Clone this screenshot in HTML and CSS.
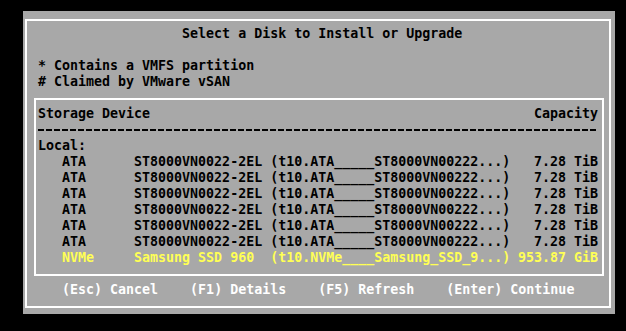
FILE: index.html
```html
<!DOCTYPE html>
<html>
  <head>
    <title>Select a Disk to Install or Upgrade</title>
    <link rel="stylesheet" href="styles.css">
  </head>
  <body>
    <div class="dialog">
      <div class="frame">
        <div class="title">Select a Disk to Install or Upgrade</div>
        <div class="legend">
          <div>* Contains a VMFS partition</div>
          <div># Claimed by VMware vSAN</div>
        </div>
        <div class="devices">
          <div class="head">
            <span>Storage Device</span>
            <span>Capacity</span>
          </div>
          <div class="rule"></div>
          <div>Local:</div>
          <div class="disk">
            <span>ATA</span><span>ST8000VN0022-2EL</span><span>(t10.ATA_____ST8000VN00222...)</span><span class="size">7.28 TiB</span>
          </div>
          <div class="disk">
            <span>ATA</span><span>ST8000VN0022-2EL</span><span>(t10.ATA_____ST8000VN00222...)</span><span class="size">7.28 TiB</span>
          </div>
          <div class="disk">
            <span>ATA</span><span>ST8000VN0022-2EL</span><span>(t10.ATA_____ST8000VN00222...)</span><span class="size">7.28 TiB</span>
          </div>
          <div class="disk">
            <span>ATA</span><span>ST8000VN0022-2EL</span><span>(t10.ATA_____ST8000VN00222...)</span><span class="size">7.28 TiB</span>
          </div>
          <div class="disk">
            <span>ATA</span><span>ST8000VN0022-2EL</span><span>(t10.ATA_____ST8000VN00222...)</span><span class="size">7.28 TiB</span>
          </div>
          <div class="disk">
            <span>ATA</span><span>ST8000VN0022-2EL</span><span>(t10.ATA_____ST8000VN00222...)</span><span class="size">7.28 TiB</span>
          </div>
          <div class="disk selected">
            <span>NVMe</span><span>Samsung SSD 960</span><span>(t10.NVMe____Samsung_SSD_9...)</span><span class="size">953.87 GiB</span>
          </div>
        </div>
        <div class="keys">
          <span>(Esc) Cancel</span>
          <span>(F1) Details</span>
          <span>(F5) Refresh</span>
          <span>(Enter) Continue</span>
        </div>
      </div>
    </div>
  </body>
</html>
```

FILE: styles.css
```css
body {
  margin: 0;
  padding: 11px 0 0 23px;
  background-color: #000;
  font-family: "DejaVu Sans Mono", "Liberation Mono", monospace;
  font-size: 13.3px;
  font-weight: bold;
  line-height: 16px;
  color: #000;
}
.dialog {
  width: 592px;
  height: 303px;
  box-sizing: border-box;
  padding: 8px 4px 6px 2px;
  background-color: #a8a8a8;
}
.frame {
  height: 100%;
  box-sizing: border-box;
  border: 2px solid #fff;
  padding: 5px 5px 8px 7px;
}
.title {
  padding-left: calc(4px + 18ch);
  margin-bottom: 16px;
}
.legend {
  padding-left: 4px;
  margin-bottom: 8px;
}
.devices {
  border: 2px solid #fff;
  padding: 6px 4px 8px 2px;
  white-space: nowrap;
}
.head {
  display: flex;
  justify-content: space-between;
}
.rule {
  height: 16px;
  background: repeating-linear-gradient(90deg, #000 0 6px, transparent 6px 8px) 0 7px / 100% 2px no-repeat;
}
.disk {
  display: grid;
  grid-template-columns: 9ch 17ch 30ch 1fr;
  padding-left: 3ch;
}
.disk .size {
  text-align: right;
}
.disk.selected {
  color: #ffff55;
}
.keys {
  display: flex;
  gap: 4ch;
  margin-top: 6px;
  padding-left: calc(4px + 3ch);
  color: #fff;
}
```
